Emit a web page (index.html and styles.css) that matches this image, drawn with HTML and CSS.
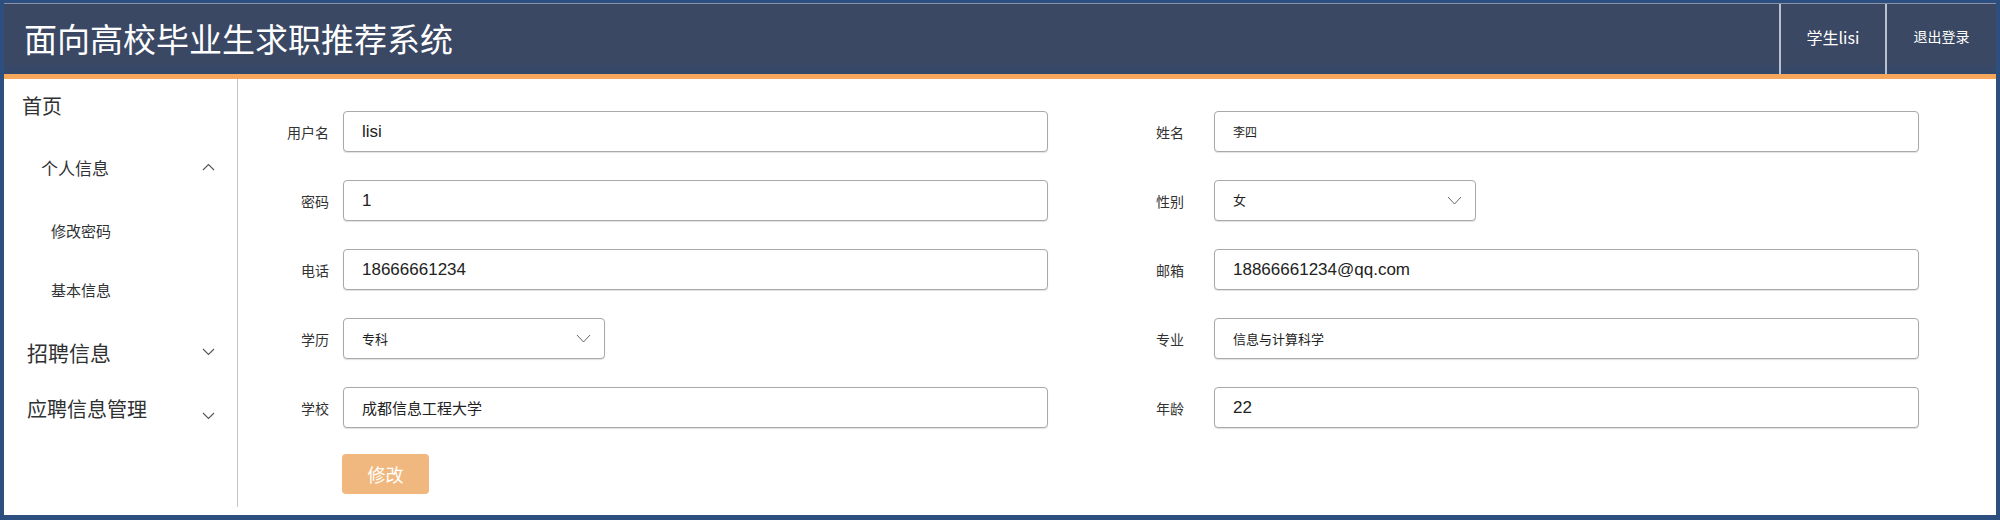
FILE: index.html
```html
<!DOCTYPE html>
<html lang="zh-CN">
<head>
<meta charset="utf-8">
<title>面向高校毕业生求职推荐系统</title>
<link rel="stylesheet" href="styles.css">
</head>
<body>
<div class="app">
  <header class="topbar">
    <h1 class="title">面向高校毕业生求职推荐系统</h1>
    <nav class="top-actions">
      <div class="top-cell user">学生lisi</div>
      <div class="top-cell logout">退出登录</div>
    </nav>
  </header>
  <div class="accent"></div>
  <div class="layout">
    <aside class="sidebar">
      <div class="menu-home">首页</div>
      <div class="menu-group open">
        <div class="submenu-title">
          <span>个人信息</span>
          <svg class="arrow" width="13" height="8" viewBox="0 0 13 8"><polyline points="1,7 6.5,1.5 12,7" fill="none" stroke="#555" stroke-width="1.1"/></svg>
        </div>
        <div class="menu-item">修改密码</div>
        <div class="menu-item">基本信息</div>
      </div>
      <div class="menu-top">
        <span>招聘信息</span>
        <svg class="arrow" width="13" height="8" viewBox="0 0 13 8"><polyline points="1,1 6.5,6.5 12,1" fill="none" stroke="#555" stroke-width="1.1"/></svg>
      </div>
      <div class="menu-top last">
        <span>应聘信息管理</span>
        <svg class="arrow low" width="13" height="8" viewBox="0 0 13 8"><polyline points="1,1 6.5,6.5 12,1" fill="none" stroke="#555" stroke-width="1.1"/></svg>
      </div>
    </aside>
    <main class="main">
      <div class="form-grid">
        <div class="field"><label class="label">用户名</label><div class="input wide"><span class="val v17">lisi</span></div></div>
        <div class="field right"><label class="label">姓名</label><div class="input wide"><span class="val v12">李四</span></div></div>
        <div class="field"><label class="label">密码</label><div class="input wide"><span class="val v17">1</span></div></div>
        <div class="field right"><label class="label">性别</label><div class="input select"><span class="val v13 up">女</span><svg class="chev" width="15" height="9" viewBox="0 0 15 9"><polyline points="1,1 7.5,8 14,1" fill="none" stroke="#666" stroke-width="1"/></svg></div></div>
        <div class="field"><label class="label">电话</label><div class="input wide"><span class="val v17">18666661234</span></div></div>
        <div class="field right"><label class="label">邮箱</label><div class="input wide"><span class="val v17">18866661234@qq.com</span></div></div>
        <div class="field"><label class="label">学历</label><div class="input select"><span class="val v13">专科</span><svg class="chev" width="15" height="9" viewBox="0 0 15 9"><polyline points="1,1 7.5,8 14,1" fill="none" stroke="#666" stroke-width="1"/></svg></div></div>
        <div class="field right"><label class="label">专业</label><div class="input wide"><span class="val v13">信息与计算科学</span></div></div>
        <div class="field"><label class="label">学校</label><div class="input wide"><span class="val v15">成都信息工程大学</span></div></div>
        <div class="field right"><label class="label">年龄</label><div class="input wide"><span class="val v17">22</span></div></div>
      </div>
      <div class="actions">
        <button class="btn" type="button">修改</button>
      </div>
    </main>
  </div>
</div>
</body>
</html>
```
FILE: styles.css
```css
* { box-sizing: border-box; }
html, body { margin: 0; padding: 0; }
body {
  width: 2000px;
  height: 520px;
  background: #2c4f80;
  font-family: "Noto Sans CJK SC", "Noto Sans", sans-serif;
  color: #303133;
  overflow: hidden;
}
.app {
  margin: 3px 4px 0 4px;
  height: 512px;
  background: #fff;
  display: flex;
  flex-direction: column;
}
.topbar {
  height: 71px;
  display: flex;
  align-items: stretch;
  justify-content: space-between;
  background: linear-gradient(#3a4864 0%, #3a4864 86%, #32486c 100%);
  border-top: 1px solid #8792a6;
}
.title {
  margin: 0;
  padding-left: 20px;
  font-size: 33px;
  font-weight: 400;
  color: #fff;
  line-height: 68px;
  letter-spacing: 0;
}
.top-actions {
  display: flex;
}
.top-cell {
  display: flex;
  align-items: center;
  justify-content: center;
  color: #fff;
  border-left: 2px solid #b9c1cf;
  padding-bottom: 4px;
}
.top-cell.user { width: 106px; font-size: 16px; }
.top-cell.logout { width: 111px; font-size: 14px; padding-bottom: 7px; }
.accent {
  height: 5px;
  background: #f6a75b;
}
.layout {
  flex: 1;
  display: flex;
  min-height: 0;
}
.sidebar {
  width: 234px;
  margin-bottom: 8px;
  border-right: 1px solid #c4c4c4;
  display: flex;
  flex-direction: column;
  color: #303133;
}
.menu-home {
  font-size: 20px;
  padding-left: 18px;
  line-height: 28px;
  margin-top: 13px;
}
.submenu-title {
  display: flex;
  align-items: center;
  justify-content: space-between;
  padding-left: 37px;
  padding-right: 22px;
  font-size: 17px;
  height: 28px;
  margin-top: 33px;
}
.menu-item {
  padding-left: 47px;
  font-size: 15px;
  height: 24px;
  line-height: 24px;
}
.submenu-title + .menu-item { margin-top: 38px; }
.menu-item + .menu-item { margin-top: 35px; }
.menu-top {
  display: flex;
  align-items: center;
  justify-content: space-between;
  padding-left: 23px;
  padding-right: 22px;
  font-size: 21px;
  height: 30px;
  margin-top: 35px;
}
.menu-top.last { margin-top: 26px; font-size: 20px; }
.arrow { display: block; }
.arrow.low { margin-top: 16px; }
.main {
  flex: 1;
  padding: 32px 0 0 25px;
}
.form-grid {
  display: grid;
  grid-template-columns: 871px 1fr;
  row-gap: 28px;
}
.field {
  display: flex;
  align-items: center;
  height: 41px;
}
.label {
  width: 80px;
  padding-right: 14px;
  text-align: right;
  font-size: 14px;
  color: #333;
}
.field.right .label { padding-right: 30px; }
.input {
  height: 41px;
  border: 1px solid #a9a9a9;
  border-radius: 4px;
  box-shadow: 0 1px 1px rgba(0,0,0,0.12);
  display: flex;
  align-items: center;
  justify-content: space-between;
  padding: 0 18px 0 18px;
  background: #fff;
}
.input.wide { width: 705px; }
.input.select { width: 262px; padding-right: 13px; }
.val {
  color: #222;
  font-family: "Liberation Sans", "Noto Sans CJK SC", sans-serif;
}
.v17 { font-size: 17px; }
.v15 { font-size: 15px; font-family: "Noto Sans CJK SC", sans-serif; }
.v13 { font-size: 13px; font-family: "Noto Sans CJK SC", sans-serif; }
.v12 { font-size: 12px; font-family: "Noto Sans CJK SC", sans-serif; }
.up { margin-top: -3px; }
.chev { display: block; }
.actions {
  padding-left: 79px;
  margin-top: 26px;
}
.btn {
  width: 87px;
  height: 40px;
  border: none;
  border-radius: 4px;
  background: #f0b87e;
  color: #fff;
  font-size: 18px;
  font-family: "Noto Sans CJK SC", sans-serif;
  padding: 0;
}
```
